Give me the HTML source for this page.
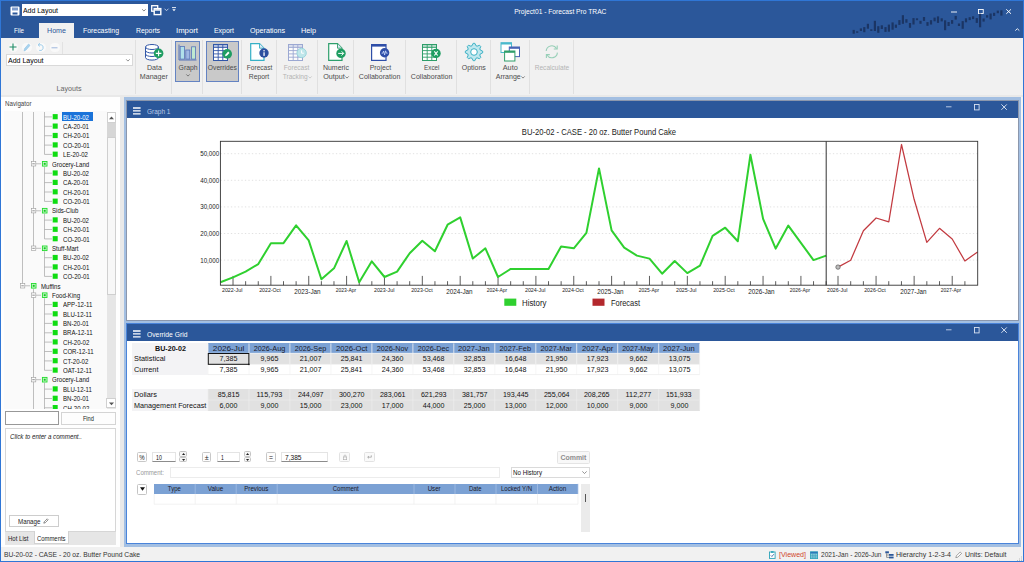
<!DOCTYPE html>
<html><head><meta charset="utf-8"><title>Project01 - Forecast Pro TRAC</title>
<style>
html,body{margin:0;padding:0;}
body{width:1024px;height:562px;overflow:hidden;position:relative;background:#f1f1f1;font-family:"Liberation Sans",sans-serif;}
div,span,svg{position:absolute;}
span{white-space:pre;display:block;}
svg{overflow:visible;}
</style></head><body>
<div style="left:0px;top:0px;width:1024px;height:38px;background:#2b579a;"></div>
<div style="left:0px;top:38px;width:1024px;height:57px;background:#f1f1f1;"></div>
<div style="left:0px;top:95px;width:1024px;height:2px;background:#e9e9e9;"></div>
<svg style="left:10px;top:6px;" width="10" height="10" viewBox="0 0 10 10"><rect x="0.5" y="0.5" width="9" height="9" rx="1" fill="#fff"/><rect x="2" y="1.5" width="6" height="3" fill="#7f9ccc"/><rect x="2.5" y="6.5" width="5" height="2" fill="#2b579a"/></svg>
<div style="left:22px;top:4px;width:126px;height:12px;background:#fff;"></div>
<span style="left:23.30px;top:6.25px;font-size:8.1px;line-height:9px;color:#000;transform:scaleX(0.8546);transform-origin:left center;">Add Layout</span>
<svg style="left:141.6px;top:9.2px;" width="4" height="3" viewBox="0 0 4 3"><path d="M0.2 0.3 L1.95 2 L3.7 0.3" fill="none" stroke="#666" stroke-width="0.8"/></svg>
<svg style="left:151px;top:5px;" width="11" height="11" viewBox="0 0 11 11"><rect x="0.7" y="0.7" width="6" height="5.5" fill="none" stroke="#fff" stroke-width="1.3"/><rect x="3.2" y="3.6" width="6.6" height="6" fill="#2b579a" stroke="#fff" stroke-width="1.4"/><rect x="4" y="4.2" width="5" height="1.5" fill="#fff"/></svg>
<svg style="left:164px;top:8px;" width="5" height="4" viewBox="0 0 5 4"><path d="M0.5 0.7 L2.5 2.7 L4.5 0.7" fill="none" stroke="#c8d4ea" stroke-width="0.9"/></svg>
<svg style="left:172px;top:7px;" width="4" height="5" viewBox="0 0 4 5"><path d="M0 0.6 H4" stroke="#fff" stroke-width="0.9"/><path d="M0.3 2.2 H3.7 L2 4.2 Z" fill="#fff"/></svg>
<span style="left:504.52px;top:7.25px;font-size:8px;line-height:9px;color:#fff;transform:scaleX(0.8348);transform-origin:center center;">Project01 - Forecast Pro TRAC</span>
<svg style="left:950.5px;top:10.5px;" width="8" height="2" viewBox="0 0 8 2"><path d="M0 1 H6" stroke="#fff" stroke-width="0.9"/></svg>
<svg style="left:978.2px;top:9px;" width="6" height="5" viewBox="0 0 6 5"><rect x="0.45" y="0.45" width="4.8" height="4" fill="none" stroke="#fff" stroke-width="0.9"/></svg>
<svg style="left:1006px;top:9px;" width="6" height="6" viewBox="0 0 6 6"><path d="M0.3 0.3 L5 4.8 M5 0.3 L0.3 4.8" stroke="#fff" stroke-width="0.95"/></svg>
<svg style="left:1014.7px;top:28.3px;" width="6" height="4" viewBox="0 0 6 4"><path d="M0.3 2.6 L2.3 0.7 L4.3 2.6" fill="none" stroke="#fff" stroke-width="0.9"/></svg>
<div style="left:39px;top:23px;width:35px;height:16px;background:#f1f1f1;"></div>
<span style="left:14.00px;top:26.25px;font-size:8px;line-height:9px;color:#fff;transform:scaleX(0.7758);transform-origin:left center;">File</span>
<span style="left:47.00px;top:26.25px;font-size:8px;line-height:9px;color:#2b579a;transform:scaleX(0.8902);transform-origin:left center;">Home</span>
<span style="left:83.00px;top:26.25px;font-size:8px;line-height:9px;color:#fff;transform:scaleX(0.8613);transform-origin:left center;">Forecasting</span>
<span style="left:136.00px;top:26.25px;font-size:8px;line-height:9px;color:#fff;transform:scaleX(0.8567);transform-origin:left center;">Reports</span>
<span style="left:176.00px;top:26.25px;font-size:8px;line-height:9px;color:#fff;transform:scaleX(0.9704);transform-origin:left center;">Import</span>
<span style="left:214.00px;top:26.25px;font-size:8px;line-height:9px;color:#fff;transform:scaleX(0.8649);transform-origin:left center;">Export</span>
<span style="left:250.00px;top:26.25px;font-size:8px;line-height:9px;color:#fff;transform:scaleX(0.8942);transform-origin:left center;">Operations</span>
<span style="left:301.00px;top:26.25px;font-size:8px;line-height:9px;color:#fff;transform:scaleX(0.9117);transform-origin:left center;">Help</span>
<svg style="left:0px;top:0px;" width="1024" height="38" viewBox="0 0 1024 38"><rect x="852.6" y="29.9" width="2.2" height="3.8" fill="#1b3564"/><rect x="856.1" y="31.3" width="2.2" height="1.5" fill="#1b3564"/><rect x="859.8" y="28.4" width="2.2" height="2.6" fill="#1b3564"/><rect x="863.2" y="27.1" width="2.2" height="5.1" fill="#1b3564"/><rect x="866.8" y="23.8" width="2.2" height="4.9" fill="#1b3564"/><rect x="870.2" y="29.3" width="2.2" height="1.6" fill="#1b3564"/><rect x="873.8" y="20.8" width="2.2" height="10.2" fill="#1b3564"/><rect x="877.2" y="26.2" width="2.2" height="6.6" fill="#1b3564"/><rect x="880.7" y="25.3" width="2.2" height="3.7" fill="#1b3564"/><rect x="884.4" y="27.1" width="2.2" height="4.8" fill="#1b3564"/><rect x="887.8" y="24.6" width="2.2" height="7.1" fill="#1b3564"/><rect x="891.5" y="22.4" width="2.2" height="7.3" fill="#1b3564"/><rect x="894.8" y="24.6" width="2.2" height="3.2" fill="#1b3564"/><rect x="898.3" y="20.1" width="2.2" height="4.8" fill="#1b3564"/><rect x="901.8" y="15.2" width="2.2" height="8.6" fill="#1b3564"/><rect x="905.3" y="19.2" width="2.2" height="3.5" fill="#1b3564"/><rect x="908.9" y="23" width="2.2" height="4.8" fill="#1b3564"/><rect x="912.4" y="18.1" width="2.2" height="6.4" fill="#1b3564"/><rect x="915.9" y="18.3" width="2.2" height="1.9" fill="#1b3564"/><rect x="919.4" y="20.8" width="2.2" height="3.0" fill="#1b3564"/><rect x="922.9" y="17" width="2.2" height="3.9" fill="#1b3564"/><rect x="926.4" y="22.1" width="2.2" height="3.7" fill="#1b3564"/><rect x="929.9" y="20.2" width="2.2" height="4.3" fill="#1b3564"/><rect x="933.5" y="17.6" width="2.2" height="3.7" fill="#1b3564"/><rect x="936.9" y="16.4" width="2.2" height="6.5" fill="#1b3564"/><rect x="940.6" y="18.3" width="2.2" height="3.1" fill="#1b3564"/><rect x="944.0" y="20.3" width="2.2" height="9.9" fill="#1b3564"/><rect x="947.5" y="22" width="2.2" height="4.0" fill="#1b3564"/><rect x="951.0" y="20.1" width="2.2" height="3.7" fill="#1b3564"/><rect x="954.6" y="15.9" width="2.2" height="3.7" fill="#1b3564"/><rect x="957.9" y="23.5" width="2.2" height="2.5" fill="#1b3564"/><rect x="961.6" y="21.1" width="2.2" height="7.7" fill="#1b3564"/><rect x="964.9" y="18.3" width="2.2" height="4.0" fill="#1b3564"/><rect x="968.6" y="17.2" width="2.2" height="2.9" fill="#1b3564"/><rect x="972.0" y="16.3" width="2.2" height="2.8" fill="#1b3564"/><rect x="975.7" y="18.1" width="2.2" height="4.8" fill="#1b3564"/><rect x="979.0" y="13.7" width="2.2" height="13.6" fill="#1b3564"/><rect x="982.5" y="18.5" width="2.2" height="3.1" fill="#1b3564"/><rect x="986.0" y="15.2" width="2.2" height="2.4" fill="#1b3564"/><rect x="989.5" y="13.5" width="2.2" height="5.9" fill="#1b3564"/><rect x="993.0" y="12.8" width="2.2" height="3.1" fill="#1b3564"/><rect x="996.7" y="10.6" width="2.2" height="2.6" fill="#1b3564"/><rect x="1000.3" y="10.3" width="2.2" height="5.3" fill="#1b3564"/></svg>
<div style="left:8.5px;top:42.5px;width:9.4px;height:9.4px;background:#f9f9f9;border-radius:50%;"></div>
<div style="left:22.3px;top:42.5px;width:9.4px;height:9.4px;background:#f9f9f9;border-radius:50%;"></div>
<div style="left:36.3px;top:42.5px;width:9.4px;height:9.4px;background:#f9f9f9;border-radius:50%;"></div>
<div style="left:50.3px;top:42.5px;width:9.4px;height:9.4px;background:#f9f9f9;border-radius:50%;"></div>
<svg style="left:9.2px;top:43.2px;" width="8" height="8" viewBox="0 0 8 8"><path d="M4 0.5 V7.5 M0.5 4 H7.5" stroke="#1e8c66" stroke-width="1.1"/></svg>
<svg style="left:23px;top:43px;" width="8" height="9" viewBox="0 0 8 9"><path d="M1 8 L1.6 5.6 L5.6 1 L7 2.4 L3 7 Z" fill="#a9d3ee" stroke="#8fc3e6" stroke-width="0.6"/></svg>
<svg style="left:37px;top:43px;" width="8" height="9" viewBox="0 0 8 9"><path d="M1.2 1.8 H4.2 A2.9 2.9 0 1 1 2.2 7.4" fill="none" stroke="#9fcdea" stroke-width="1"/><path d="M2.9 0.2 L1 1.8 L2.9 3.4" fill="none" stroke="#9fcdea" stroke-width="1"/></svg>
<svg style="left:51px;top:47px;" width="8" height="2" viewBox="0 0 8 2"><path d="M0.5 0.8 H6.5" stroke="#9fb7dd" stroke-width="1"/></svg>
<div style="left:62.2px;top:41.5px;width:1px;height:12px;background:#e2e2e2;"></div>
<div style="left:6px;top:54px;width:126.5px;height:12px;background:#fff;border:1px solid #d9d9d9;box-sizing:border-box;"></div>
<span style="left:7.60px;top:56.25px;font-size:8.1px;line-height:9px;color:#000;transform:scaleX(0.8668);transform-origin:left center;">Add Layout</span>
<svg style="left:126.3px;top:59.2px;" width="4" height="3" viewBox="0 0 4 3"><path d="M0.2 0.3 L1.95 2.1 L3.7 0.3" fill="none" stroke="#777" stroke-width="0.8"/></svg>
<span style="left:54.98px;top:84.25px;font-size:8px;line-height:9px;color:#666;transform:scaleX(0.8919);transform-origin:center center;">Layouts</span>
<div style="left:135.0px;top:40px;width:1px;height:54px;background:#e0e0e0;"></div>
<div style="left:171.2px;top:40px;width:1px;height:54px;background:#e0e0e0;"></div>
<div style="left:202.1px;top:40px;width:1px;height:54px;background:#e0e0e0;"></div>
<div style="left:241.1px;top:40px;width:1px;height:54px;background:#e0e0e0;"></div>
<div style="left:276.1px;top:40px;width:1px;height:54px;background:#e0e0e0;"></div>
<div style="left:317.0px;top:40px;width:1px;height:54px;background:#e0e0e0;"></div>
<div style="left:353.1px;top:40px;width:1px;height:54px;background:#e0e0e0;"></div>
<div style="left:405.1px;top:40px;width:1px;height:54px;background:#e0e0e0;"></div>
<div style="left:456.1px;top:40px;width:1px;height:54px;background:#e0e0e0;"></div>
<div style="left:490.0px;top:40px;width:1px;height:54px;background:#e0e0e0;"></div>
<div style="left:529.0px;top:40px;width:1px;height:54px;background:#e0e0e0;"></div>
<div style="left:573.1px;top:40px;width:1px;height:54px;background:#e0e0e0;"></div>
<div style="left:175.2px;top:41px;width:24.8px;height:41px;background:#c9c9c9;border:1px solid #6483c2;box-sizing:border-box;"></div>
<div style="left:206px;top:41px;width:32.9px;height:41px;background:#c9c9c9;border:1px solid #6483c2;box-sizing:border-box;"></div>
<span style="left:145.55px;top:63.25px;font-size:8px;line-height:9px;color:#4c4c4c;transform:scaleX(0.8872);transform-origin:center center;">Data</span>
<span style="left:138.21px;top:72.25px;font-size:8px;line-height:9px;color:#4c4c4c;transform:scaleX(0.8867);transform-origin:center center;">Manager</span>
<span style="left:176.58px;top:63.25px;font-size:8px;line-height:9px;color:#4c4c4c;transform:scaleX(0.8545);transform-origin:center center;">Graph</span>
<svg style="left:185.7px;top:74px;" width="4" height="3" viewBox="0 0 4 3"><path d="M0.3 0.4 L2 2.1 L3.7 0.4" fill="none" stroke="#555" stroke-width="0.7"/></svg>
<span style="left:204.96px;top:63.25px;font-size:8px;line-height:9px;color:#4c4c4c;transform:scaleX(0.8360);transform-origin:center center;">Overrides</span>
<span style="left:243.74px;top:63.25px;font-size:8px;line-height:9px;color:#4c4c4c;transform:scaleX(0.8193);transform-origin:center center;">Forecast</span>
<span style="left:247.29px;top:72.25px;font-size:8px;line-height:9px;color:#4c4c4c;transform:scaleX(0.8536);transform-origin:center center;">Report</span>
<span style="left:281.44px;top:63.25px;font-size:8px;line-height:9px;color:#b4b4b4;transform:scaleX(0.8193);transform-origin:center center;">Forecast</span>
<span style="left:279.80px;top:72.25px;font-size:8px;line-height:9px;color:#b4b4b4;transform:scaleX(0.8226);transform-origin:center center;">Tracking</span>
<svg style="left:308.3px;top:75.5px;" width="4" height="3" viewBox="0 0 4 3"><path d="M0.3 0.4 L2 2.1 L3.7 0.4" fill="none" stroke="#bbb" stroke-width="0.7"/></svg>
<span style="left:320.81px;top:63.25px;font-size:8px;line-height:9px;color:#4c4c4c;transform:scaleX(0.8730);transform-origin:center center;">Numeric</span>
<span style="left:321.69px;top:72.25px;font-size:8px;line-height:9px;color:#4c4c4c;transform:scaleX(0.8953);transform-origin:center center;">Output</span>
<svg style="left:345.25px;top:75.5px;" width="4" height="3" viewBox="0 0 4 3"><path d="M0.3 0.4 L2 2.1 L3.7 0.4" fill="none" stroke="#555" stroke-width="0.7"/></svg>
<span style="left:367.55px;top:63.25px;font-size:8px;line-height:9px;color:#4c4c4c;transform:scaleX(0.8632);transform-origin:center center;">Project</span>
<span style="left:356.43px;top:72.25px;font-size:8px;line-height:9px;color:#4c4c4c;transform:scaleX(0.8803);transform-origin:center center;">Collaboration</span>
<span style="left:421.52px;top:63.25px;font-size:8px;line-height:9px;color:#4c4c4c;transform:scaleX(0.7923);transform-origin:center center;">Excel</span>
<span style="left:407.73px;top:72.25px;font-size:8px;line-height:9px;color:#4c4c4c;transform:scaleX(0.8803);transform-origin:center center;">Collaboration</span>
<span style="left:460.21px;top:63.25px;font-size:8px;line-height:9px;color:#4c4c4c;transform:scaleX(0.8703);transform-origin:center center;">Options</span>
<span style="left:501.77px;top:63.25px;font-size:8px;line-height:9px;color:#4c4c4c;transform:scaleX(0.9108);transform-origin:center center;">Auto</span>
<span style="left:493.77px;top:72.25px;font-size:8px;line-height:9px;color:#4c4c4c;transform:scaleX(0.8782);transform-origin:center center;">Arrange</span>
<svg style="left:521.3px;top:75.5px;" width="4" height="3" viewBox="0 0 4 3"><path d="M0.3 0.4 L2 2.1 L3.7 0.4" fill="none" stroke="#555" stroke-width="0.7"/></svg>
<span style="left:531.09px;top:63.25px;font-size:8px;line-height:9px;color:#b4b4b4;transform:scaleX(0.8251);transform-origin:center center;">Recalculate</span>
<svg style="left:144px;top:43px;" width="22" height="20" viewBox="0 0 22 20"><path d="M1.5 4 V14.5 A6.5 2.6 0 0 0 14.5 14.5 V4" fill="#fff" stroke="#3257a8" stroke-width="1"/>
<ellipse cx="8" cy="4" rx="6.5" ry="2.5" fill="#fff" stroke="#3257a8" stroke-width="1"/>
<path d="M1.5 7.5 A6.5 2.5 0 0 0 14.5 7.5 M1.5 11 A6.5 2.5 0 0 0 14.5 11" fill="none" stroke="#3257a8" stroke-width="1"/>
<circle cx="14.6" cy="10.4" r="4.8" fill="#1f9d62"/><path d="M14.6 7.6 V13.2 M11.8 10.4 H17.4" stroke="#fff" stroke-width="1.1"/></svg>
<svg style="left:178px;top:44px;" width="19" height="17" viewBox="0 0 19 17"><path d="M1 0.5 V16 H18.5" fill="none" stroke="#5674ba" stroke-width="1"/>
<rect x="2.2" y="2.5" width="4.2" height="12.6" fill="#b0e0ea" stroke="#5674ba" stroke-width="0.8"/>
<rect x="7.8" y="6" width="4" height="9.1" fill="#9fb8e4" stroke="#5674ba" stroke-width="0.8"/>
<rect x="13.6" y="2.8" width="4" height="12.3" fill="#bfe9d0" stroke="#5674ba" stroke-width="0.8"/></svg>
<svg style="left:213px;top:44px;" width="22" height="18" viewBox="0 0 22 18"><g opacity="1"><rect x="0.5" y="0.5" width="14" height="16" fill="#fff" stroke="#3257a8" stroke-width="1"/><rect x="0.5" y="0.5" width="14" height="3" fill="#3257a8" opacity="0.35"/><path d="M0.5 3.4 H14.5" stroke="#3257a8" stroke-width="0.9"/><path d="M0.5 6.6 H14.5" stroke="#3257a8" stroke-width="0.9"/><path d="M0.5 9.9 H14.5" stroke="#3257a8" stroke-width="0.9"/><path d="M0.5 13.2 H14.5" stroke="#3257a8" stroke-width="0.9"/><path d="M5.2 0.5 V16.5" stroke="#3257a8" stroke-width="0.9"/><path d="M9.8 0.5 V16.5" stroke="#3257a8" stroke-width="0.9"/></g><circle cx="14.2" cy="9.9" r="4.8" fill="#1f9d62"/><path d="M12 12.2 L12.5 10.4 L15.2 7.6 L16.5 8.9 L13.8 11.7 Z" fill="#fff"/></svg>
<svg style="left:250px;top:43px;" width="20" height="19" viewBox="0 0 20 19"><path d="M0.7 0.7 H9.5 L14 5.2 V17.3 H0.7 Z" fill="#fff" stroke="#35b0c6" stroke-width="1.2"/><path d="M9.5 0.7 V5.2 H14" fill="#dfe7f5" stroke="#35b0c6" stroke-width="0.9"/><circle cx="14" cy="10" r="4.7" fill="#2c4f9f"/><rect x="13.4" y="9.3" width="1.3" height="3.6" fill="#fff"/><circle cx="14.05" cy="7.7" r="0.8" fill="#fff"/></svg>
<svg style="left:288px;top:44px;" width="20" height="18" viewBox="0 0 20 18"><g opacity="0.75"><rect x="0.5" y="0.5" width="14" height="16" fill="#fff" stroke="#7f90c8" stroke-width="1"/><rect x="0.5" y="0.5" width="14" height="3" fill="#7f90c8" opacity="0.35"/><path d="M0.5 3.4 H14.5" stroke="#7f90c8" stroke-width="0.9"/><path d="M0.5 6.6 H14.5" stroke="#7f90c8" stroke-width="0.9"/><path d="M0.5 9.9 H14.5" stroke="#7f90c8" stroke-width="0.9"/><path d="M0.5 13.2 H14.5" stroke="#7f90c8" stroke-width="0.9"/><path d="M5.2 0.5 V16.5" stroke="#7f90c8" stroke-width="0.9"/><path d="M9.8 0.5 V16.5" stroke="#7f90c8" stroke-width="0.9"/></g><circle cx="13.6" cy="9" r="4.7" fill="#bfe6ea" stroke="#8fd0d8" stroke-width="0.8"/><path d="M13.6 6.3 V9.2 H15.8" fill="none" stroke="#fff" stroke-width="1"/></svg>
<svg style="left:327.5px;top:43px;" width="20" height="19" viewBox="0 0 20 19"><path d="M0.7 0.7 H9.5 L14 5.2 V17.3 H0.7 Z" fill="#fff" stroke="#2e9f6c" stroke-width="1.2"/><path d="M9.5 0.7 V5.2 H14" fill="#dfe7f5" stroke="#2e9f6c" stroke-width="0.9"/><circle cx="13" cy="10.4" r="4.7" fill="#1f9d62"/><path d="M10.2 10.4 H15.6 M13.6 8.3 L15.7 10.4 L13.6 12.5" fill="none" stroke="#fff" stroke-width="1"/></svg>
<svg style="left:371px;top:44px;" width="20" height="18" viewBox="0 0 20 18"><rect x="0.6" y="0.6" width="14.4" height="15.8" fill="#fff" stroke="#2f4fa8" stroke-width="1.2"/><rect x="0.6" y="0.6" width="14.4" height="2" fill="#2f4fa8"/><circle cx="13.6" cy="8.8" r="4.7" fill="#2f4fa8"/><path d="M10.6 9.2 H11.8 L12.6 7 L13.6 11 L14.6 6.8 L15.4 9.2 H16.6" fill="none" stroke="#cfe0ff" stroke-width="0.8"/></svg>
<svg style="left:422px;top:44px;" width="20" height="18" viewBox="0 0 20 18"><g opacity="1"><rect x="0.5" y="0.5" width="14" height="16" fill="#fff" stroke="#2f9e6a" stroke-width="1"/><rect x="0.5" y="0.5" width="14" height="3" fill="#2f9e6a" opacity="0.35"/><path d="M0.5 3.4 H14.5" stroke="#2f9e6a" stroke-width="0.9"/><path d="M0.5 6.6 H14.5" stroke="#2f9e6a" stroke-width="0.9"/><path d="M0.5 9.9 H14.5" stroke="#2f9e6a" stroke-width="0.9"/><path d="M0.5 13.2 H14.5" stroke="#2f9e6a" stroke-width="0.9"/><path d="M5.2 0.5 V16.5" stroke="#2f9e6a" stroke-width="0.9"/><path d="M9.8 0.5 V16.5" stroke="#2f9e6a" stroke-width="0.9"/></g><circle cx="14" cy="9.4" r="4.7" fill="#1f9d62"/><path d="M12.3 7.3 L15.7 11.5 M15.7 7.3 L12.3 11.5" stroke="#fff" stroke-width="1.1"/></svg>
<svg style="left:464px;top:42px;" width="20" height="20" viewBox="0 0 20 20"><polygon points="9.15,1.34 10.85,1.34 11.92,3.68 13.11,4.18 15.52,3.27 16.73,4.48 15.82,6.89 16.32,8.08 18.66,9.15 18.66,10.85 16.32,11.92 15.82,13.11 16.73,15.52 15.52,16.73 13.11,15.82 11.92,16.32 10.85,18.66 9.15,18.66 8.08,16.32 6.89,15.82 4.48,16.73 3.27,15.52 4.18,13.11 3.68,11.92 1.34,10.85 1.34,9.15 3.68,8.08 4.18,6.89 3.27,4.48 4.48,3.27 6.89,4.18 8.08,3.68" fill="#bfe7ee" stroke="#39b0c4" stroke-width="1" stroke-linejoin="round"/><circle cx="10" cy="10" r="3.3" fill="#fff" stroke="#39b0c4" stroke-width="1"/></svg>
<svg style="left:500px;top:42px;" width="22" height="20" viewBox="0 0 22 20"><rect x="1" y="0.7" width="10.5" height="9.8" fill="#fff" stroke="#49b9cc" stroke-width="1"/><rect x="1" y="0.7" width="10.5" height="1.8" fill="#49b9cc"/><rect x="9.3" y="5" width="10.2" height="9.6" fill="#fff" stroke="#4762b4" stroke-width="1"/><rect x="9.3" y="5" width="10.2" height="1.8" fill="#4762b4"/><rect x="4.6" y="9" width="10.3" height="10" fill="#fff" stroke="#2f9e6a" stroke-width="1"/><rect x="4.6" y="9" width="10.3" height="1.8" fill="#2f9e6a"/></svg>
<svg style="left:544px;top:44px;" width="16" height="16" viewBox="0 0 16 16"><g opacity="0.55"><path d="M2.2 7 A5.6 5.6 0 0 1 12.6 4.6" fill="none" stroke="#4fb58a" stroke-width="1.1"/><path d="M13.4 8.6 A5.6 5.6 0 0 1 3 11" fill="none" stroke="#4fb58a" stroke-width="1.1"/><path d="M13.2 1.6 V5 H9.8" fill="none" stroke="#4fb58a" stroke-width="1.1"/><path d="M2.4 14 V10.6 H5.8" fill="none" stroke="#4fb58a" stroke-width="1.1"/></g></svg>
<div style="left:0px;top:97px;width:120px;height:450px;background:#fefefe;"></div>
<div style="left:120.3px;top:97px;width:3.4px;height:450px;background:#e9e9e9;"></div>
<span style="left:4.90px;top:99.25px;font-size:7.2px;line-height:9px;color:#444;transform:scaleX(0.8614);transform-origin:left center;">Navigator</span>
<div style="left:4px;top:111px;width:102.5px;height:297.5px;background:#fafafa;"></div>
<div style="left:4px;top:111.5px;width:102px;height:297px;overflow:hidden"><svg style="left:-4px;top:-111.5px" width="120" height="562" viewBox="0 0 120 562"><path d="M22.5 109.0 V285.8" stroke="#a4a4a4" stroke-width="0.7"/><path d="M33.5 109.0 V248.3" stroke="#a4a4a4" stroke-width="0.7"/><path d="M33.5 288.8 V410.0" stroke="#a4a4a4" stroke-width="0.7"/><path d="M44.5 109.0 V154.4" stroke="#a4a4a4" stroke-width="0.7"/><path d="M44.5 166.8 V201.4" stroke="#a4a4a4" stroke-width="0.7"/><path d="M44.5 213.8 V238.9" stroke="#a4a4a4" stroke-width="0.7"/><path d="M44.5 251.3 V276.4" stroke="#a4a4a4" stroke-width="0.7"/><path d="M44.5 298.2 V370.3" stroke="#a4a4a4" stroke-width="0.7"/><path d="M44.5 382.7 V410.0" stroke="#a4a4a4" stroke-width="0.7"/><path d="M44.5 116.9 H52" stroke="#a4a4a4" stroke-width="0.7"/><rect x="52.7" y="114.1" width="5" height="5.2" fill="#0fdc12"/><path d="M44.5 126.3 H52" stroke="#a4a4a4" stroke-width="0.7"/><rect x="52.7" y="123.5" width="5" height="5.2" fill="#0fdc12"/><path d="M44.5 135.7 H52" stroke="#a4a4a4" stroke-width="0.7"/><rect x="52.7" y="132.9" width="5" height="5.2" fill="#0fdc12"/><path d="M44.5 145.1 H52" stroke="#a4a4a4" stroke-width="0.7"/><rect x="52.7" y="142.3" width="5" height="5.2" fill="#0fdc12"/><path d="M44.5 154.4 H52" stroke="#a4a4a4" stroke-width="0.7"/><rect x="52.7" y="151.6" width="5" height="5.2" fill="#0fdc12"/><path d="M33.5 163.8 H41" stroke="#a4a4a4" stroke-width="0.7"/><rect x="31.3" y="161.5" width="4.5" height="4.5" fill="#fff" stroke="#9a9a9a" stroke-width="0.6"/><path d="M32.3 163.8 H34.8" stroke="#444" stroke-width="0.6"/><rect x="42.4" y="161.5" width="4.6" height="4.6" fill="#d4f8d8" stroke="#1fdc2a" stroke-width="0.9"/><rect x="43.7" y="162.8" width="2" height="2" fill="#14c81e"/><path d="M44.5 173.2 H52" stroke="#a4a4a4" stroke-width="0.7"/><rect x="52.7" y="170.4" width="5" height="5.2" fill="#0fdc12"/><path d="M44.5 182.6 H52" stroke="#a4a4a4" stroke-width="0.7"/><rect x="52.7" y="179.8" width="5" height="5.2" fill="#0fdc12"/><path d="M44.5 192.0 H52" stroke="#a4a4a4" stroke-width="0.7"/><rect x="52.7" y="189.2" width="5" height="5.2" fill="#0fdc12"/><path d="M44.5 201.4 H52" stroke="#a4a4a4" stroke-width="0.7"/><rect x="52.7" y="198.6" width="5" height="5.2" fill="#0fdc12"/><path d="M33.5 210.8 H41" stroke="#a4a4a4" stroke-width="0.7"/><rect x="31.3" y="208.4" width="4.5" height="4.5" fill="#fff" stroke="#9a9a9a" stroke-width="0.6"/><path d="M32.3 210.8 H34.8" stroke="#444" stroke-width="0.6"/><rect x="42.4" y="208.4" width="4.6" height="4.6" fill="#d4f8d8" stroke="#1fdc2a" stroke-width="0.9"/><rect x="43.7" y="209.8" width="2" height="2" fill="#14c81e"/><path d="M44.5 220.1 H52" stroke="#a4a4a4" stroke-width="0.7"/><rect x="52.7" y="217.3" width="5" height="5.2" fill="#0fdc12"/><path d="M44.5 229.5 H52" stroke="#a4a4a4" stroke-width="0.7"/><rect x="52.7" y="226.7" width="5" height="5.2" fill="#0fdc12"/><path d="M44.5 238.9 H52" stroke="#a4a4a4" stroke-width="0.7"/><rect x="52.7" y="236.1" width="5" height="5.2" fill="#0fdc12"/><path d="M33.5 248.3 H41" stroke="#a4a4a4" stroke-width="0.7"/><rect x="31.3" y="246.0" width="4.5" height="4.5" fill="#fff" stroke="#9a9a9a" stroke-width="0.6"/><path d="M32.3 248.3 H34.8" stroke="#444" stroke-width="0.6"/><rect x="42.4" y="246.0" width="4.6" height="4.6" fill="#d4f8d8" stroke="#1fdc2a" stroke-width="0.9"/><rect x="43.7" y="247.3" width="2" height="2" fill="#14c81e"/><path d="M44.5 257.7 H52" stroke="#a4a4a4" stroke-width="0.7"/><rect x="52.7" y="254.9" width="5" height="5.2" fill="#0fdc12"/><path d="M44.5 267.1 H52" stroke="#a4a4a4" stroke-width="0.7"/><rect x="52.7" y="264.3" width="5" height="5.2" fill="#0fdc12"/><path d="M44.5 276.4 H52" stroke="#a4a4a4" stroke-width="0.7"/><rect x="52.7" y="273.6" width="5" height="5.2" fill="#0fdc12"/><path d="M22.5 285.8 H30" stroke="#a4a4a4" stroke-width="0.7"/><rect x="20.3" y="283.5" width="4.5" height="4.5" fill="#fff" stroke="#9a9a9a" stroke-width="0.6"/><path d="M21.3 285.8 H23.8" stroke="#444" stroke-width="0.6"/><rect x="31.4" y="283.5" width="4.6" height="4.6" fill="#d4f8d8" stroke="#1fdc2a" stroke-width="0.9"/><rect x="32.7" y="284.8" width="2" height="2" fill="#14c81e"/><path d="M33.5 295.2 H41" stroke="#a4a4a4" stroke-width="0.7"/><rect x="31.3" y="292.9" width="4.5" height="4.5" fill="#fff" stroke="#9a9a9a" stroke-width="0.6"/><path d="M32.3 295.2 H34.8" stroke="#444" stroke-width="0.6"/><rect x="42.4" y="292.9" width="4.6" height="4.6" fill="#d4f8d8" stroke="#1fdc2a" stroke-width="0.9"/><rect x="43.7" y="294.2" width="2" height="2" fill="#14c81e"/><path d="M44.5 304.6 H52" stroke="#a4a4a4" stroke-width="0.7"/><rect x="52.7" y="301.8" width="5" height="5.2" fill="#0fdc12"/><path d="M44.5 314.0 H52" stroke="#a4a4a4" stroke-width="0.7"/><rect x="52.7" y="311.2" width="5" height="5.2" fill="#0fdc12"/><path d="M44.5 323.4 H52" stroke="#a4a4a4" stroke-width="0.7"/><rect x="52.7" y="320.6" width="5" height="5.2" fill="#0fdc12"/><path d="M44.5 332.8 H52" stroke="#a4a4a4" stroke-width="0.7"/><rect x="52.7" y="330.0" width="5" height="5.2" fill="#0fdc12"/><path d="M44.5 342.1 H52" stroke="#a4a4a4" stroke-width="0.7"/><rect x="52.7" y="339.3" width="5" height="5.2" fill="#0fdc12"/><path d="M44.5 351.5 H52" stroke="#a4a4a4" stroke-width="0.7"/><rect x="52.7" y="348.7" width="5" height="5.2" fill="#0fdc12"/><path d="M44.5 360.9 H52" stroke="#a4a4a4" stroke-width="0.7"/><rect x="52.7" y="358.1" width="5" height="5.2" fill="#0fdc12"/><path d="M44.5 370.3 H52" stroke="#a4a4a4" stroke-width="0.7"/><rect x="52.7" y="367.5" width="5" height="5.2" fill="#0fdc12"/><path d="M33.5 379.7 H41" stroke="#a4a4a4" stroke-width="0.7"/><rect x="31.3" y="377.4" width="4.5" height="4.5" fill="#fff" stroke="#9a9a9a" stroke-width="0.6"/><path d="M32.3 379.7 H34.8" stroke="#444" stroke-width="0.6"/><rect x="42.4" y="377.4" width="4.6" height="4.6" fill="#d4f8d8" stroke="#1fdc2a" stroke-width="0.9"/><rect x="43.7" y="378.7" width="2" height="2" fill="#14c81e"/><path d="M44.5 389.1 H52" stroke="#a4a4a4" stroke-width="0.7"/><rect x="52.7" y="386.3" width="5" height="5.2" fill="#0fdc12"/><path d="M44.5 398.5 H52" stroke="#a4a4a4" stroke-width="0.7"/><rect x="52.7" y="395.7" width="5" height="5.2" fill="#0fdc12"/><path d="M44.5 407.8 H52" stroke="#a4a4a4" stroke-width="0.7"/><rect x="52.7" y="405.0" width="5" height="5.2" fill="#0fdc12"/></svg></div>
<div style="left:62px;top:112.2px;width:30.7px;height:9.2px;background:#1a73d9;"></div>
<div style="left:4px;top:109px;width:102px;height:299.5px;overflow:hidden">
<span style="left:59.30px;top:5.25px;font-size:7.0px;line-height:7px;color:#fff;transform:scaleX(0.8680);transform-origin:left center;">BU-20-02</span>
<span style="left:59.30px;top:14.25px;font-size:7.0px;line-height:7px;color:#111;transform:scaleX(0.8680);transform-origin:left center;">CA-20-01</span>
<span style="left:59.30px;top:23.25px;font-size:7.0px;line-height:7px;color:#111;transform:scaleX(0.8680);transform-origin:left center;">CH-20-01</span>
<span style="left:59.30px;top:33.25px;font-size:7.0px;line-height:7px;color:#111;transform:scaleX(0.8680);transform-origin:left center;">CO-20-01</span>
<span style="left:59.30px;top:42.25px;font-size:7.0px;line-height:7px;color:#111;transform:scaleX(0.8680);transform-origin:left center;">LE-20-02</span>
<span style="left:48.30px;top:52.25px;font-size:7.0px;line-height:7px;color:#111;transform:scaleX(0.8680);transform-origin:left center;">Grocery-Land</span>
<span style="left:59.30px;top:61.25px;font-size:7.0px;line-height:7px;color:#111;transform:scaleX(0.8680);transform-origin:left center;">BU-20-02</span>
<span style="left:59.30px;top:70.25px;font-size:7.0px;line-height:7px;color:#111;transform:scaleX(0.8680);transform-origin:left center;">CA-20-01</span>
<span style="left:59.30px;top:80.25px;font-size:7.0px;line-height:7px;color:#111;transform:scaleX(0.8680);transform-origin:left center;">CH-20-01</span>
<span style="left:59.30px;top:89.25px;font-size:7.0px;line-height:7px;color:#111;transform:scaleX(0.8680);transform-origin:left center;">CO-20-01</span>
<span style="left:48.30px;top:98.25px;font-size:7.0px;line-height:7px;color:#111;transform:scaleX(0.8680);transform-origin:left center;">Sids-Club</span>
<span style="left:59.30px;top:108.25px;font-size:7.0px;line-height:7px;color:#111;transform:scaleX(0.8680);transform-origin:left center;">BU-20-02</span>
<span style="left:59.30px;top:117.25px;font-size:7.0px;line-height:7px;color:#111;transform:scaleX(0.8680);transform-origin:left center;">CH-20-01</span>
<span style="left:59.30px;top:127.25px;font-size:7.0px;line-height:7px;color:#111;transform:scaleX(0.8680);transform-origin:left center;">CO-20-01</span>
<span style="left:48.30px;top:136.25px;font-size:7.0px;line-height:7px;color:#111;transform:scaleX(0.8680);transform-origin:left center;">Stuff-Mart</span>
<span style="left:59.30px;top:145.25px;font-size:7.0px;line-height:7px;color:#111;transform:scaleX(0.8680);transform-origin:left center;">BU-20-02</span>
<span style="left:59.30px;top:155.25px;font-size:7.0px;line-height:7px;color:#111;transform:scaleX(0.8680);transform-origin:left center;">CH-20-01</span>
<span style="left:59.30px;top:164.25px;font-size:7.0px;line-height:7px;color:#111;transform:scaleX(0.8680);transform-origin:left center;">CO-20-01</span>
<span style="left:37.30px;top:174.25px;font-size:7.0px;line-height:7px;color:#111;transform:scaleX(0.8680);transform-origin:left center;">Muffins</span>
<span style="left:48.30px;top:183.25px;font-size:7.0px;line-height:7px;color:#111;transform:scaleX(0.8680);transform-origin:left center;">Food-King</span>
<span style="left:59.30px;top:192.25px;font-size:7.0px;line-height:7px;color:#111;transform:scaleX(0.8680);transform-origin:left center;">APP-12-11</span>
<span style="left:59.30px;top:202.25px;font-size:7.0px;line-height:7px;color:#111;transform:scaleX(0.8680);transform-origin:left center;">BLU-12-11</span>
<span style="left:59.30px;top:211.25px;font-size:7.0px;line-height:7px;color:#111;transform:scaleX(0.8680);transform-origin:left center;">BN-20-01</span>
<span style="left:59.30px;top:220.25px;font-size:7.0px;line-height:7px;color:#111;transform:scaleX(0.8680);transform-origin:left center;">BRA-12-11</span>
<span style="left:59.30px;top:230.25px;font-size:7.0px;line-height:7px;color:#111;transform:scaleX(0.8680);transform-origin:left center;">CH-20-02</span>
<span style="left:59.30px;top:239.25px;font-size:7.0px;line-height:7px;color:#111;transform:scaleX(0.8680);transform-origin:left center;">COR-12-11</span>
<span style="left:59.30px;top:249.25px;font-size:7.0px;line-height:7px;color:#111;transform:scaleX(0.8680);transform-origin:left center;">CT-20-02</span>
<span style="left:59.30px;top:258.25px;font-size:7.0px;line-height:7px;color:#111;transform:scaleX(0.8680);transform-origin:left center;">OAT-12-11</span>
<span style="left:48.30px;top:267.25px;font-size:7.0px;line-height:7px;color:#111;transform:scaleX(0.8680);transform-origin:left center;">Grocery-Land</span>
<span style="left:59.30px;top:277.25px;font-size:7.0px;line-height:7px;color:#111;transform:scaleX(0.8680);transform-origin:left center;">BLU-12-11</span>
<span style="left:59.30px;top:286.25px;font-size:7.0px;line-height:7px;color:#111;transform:scaleX(0.8680);transform-origin:left center;">BN-20-01</span>
<span style="left:59.30px;top:296.25px;font-size:7.0px;line-height:7px;color:#111;transform:scaleX(0.8680);transform-origin:left center;">CH-20-02</span>
</div>
<div style="left:106.5px;top:111.5px;width:9.5px;height:297px;background:#e6e6e6;"></div>
<div style="left:106.5px;top:122.5px;width:9.5px;height:14.5px;background:#d6d6d6;"></div>
<div style="left:106.5px;top:137px;width:9.5px;height:158px;background:#f7f7f7;border:1px solid #cfcfcf;box-sizing:border-box;"></div>
<div style="left:106.5px;top:112px;width:9.2px;height:10.5px;background:#fff;border:1px solid #d0d0d0;box-sizing:border-box;"></div>
<svg style="left:108.6px;top:115.5px;" width="5" height="4" viewBox="0 0 5 4"><path d="M0 3.2 L2.5 0.4 L5 3.2 Z" fill="#555"/></svg>
<div style="left:106.3px;top:398.2px;width:9.4px;height:10.3px;background:#fff;border:1px solid #d0d0d0;box-sizing:border-box;"></div>
<svg style="left:108.6px;top:401.6px;" width="5" height="4" viewBox="0 0 5 4"><path d="M0 0.4 L2.5 3.2 L5 0.4 Z" fill="#555"/></svg>
<div style="left:4.6px;top:411.4px;width:54.2px;height:13.3px;background:#fff;border:1px solid #989898;box-sizing:border-box;"></div>
<div style="left:61.2px;top:412px;width:54.5px;height:12.6px;background:#fdfdfd;border:1px solid #d4d4d4;box-sizing:border-box;"></div>
<span style="left:81.11px;top:414.25px;font-size:7.6px;line-height:9px;color:#222;transform:scaleX(0.7442);transform-origin:center center;">Find</span>
<div style="left:4.6px;top:428.2px;width:111.2px;height:103.4px;background:#fff;border:1px solid #d6d6d6;box-sizing:border-box;"></div>
<span style="left:10.00px;top:432.25px;font-size:7.6px;line-height:9px;color:#222;transform:scaleX(0.8162);transform-origin:left center;font-style:italic;">Click to enter a comment..</span>
<div style="left:9px;top:514.7px;width:49.8px;height:12.8px;background:#fff;border:1px solid #cdcdcd;box-sizing:border-box;"></div>
<span style="left:18.00px;top:517.25px;font-size:7.6px;line-height:9px;color:#222;transform:scaleX(0.8196);transform-origin:left center;">Manage</span>
<svg style="left:43px;top:518px;" width="6" height="6" viewBox="0 0 6 6"><path d="M0.8 5.2 L1.2 3.8 L4.2 0.8 L5.2 1.8 L2.2 4.8 Z" fill="none" stroke="#444" stroke-width="0.6"/></svg>
<div style="left:4.6px;top:531.6px;width:111.2px;height:13.2px;background:#e6e6e6;"></div>
<div style="left:33.5px;top:531.4px;width:35.2px;height:12.8px;background:#fff;border:1px solid #d2d2d2;box-sizing:border-box;border-top:none"></div>
<span style="left:8.00px;top:534.25px;font-size:7.6px;line-height:9px;color:#222;transform:scaleX(0.7961);transform-origin:left center;">Hot List</span>
<span style="left:37.00px;top:534.25px;font-size:7.6px;line-height:9px;color:#222;transform:scaleX(0.7762);transform-origin:left center;">Comments</span>
<div style="left:0px;top:547px;width:1024px;height:15px;background:#f1f1f1;"></div>
<span style="left:3.50px;top:550.25px;font-size:7.8px;line-height:9px;color:#333;transform:scaleX(0.8621);transform-origin:left center;">BU-20-02 - CASE - 20 oz. Butter Pound Cake</span>
<span style="left:778.60px;top:550.25px;font-size:7.8px;line-height:9px;color:#d0452c;transform:scaleX(0.9071);transform-origin:left center;">[Viewed]</span>
<span style="left:820.50px;top:550.25px;font-size:7.8px;line-height:9px;color:#333;transform:scaleX(0.8406);transform-origin:left center;">2021-Jan - 2026-Jun</span>
<span style="left:896.00px;top:550.25px;font-size:7.8px;line-height:9px;color:#333;transform:scaleX(0.9065);transform-origin:left center;">Hierarchy 1-2-3-4</span>
<span style="left:965.00px;top:550.25px;font-size:7.8px;line-height:9px;color:#333;transform:scaleX(0.8865);transform-origin:left center;">Units: Default</span>
<svg style="left:769px;top:550.5px;" width="7" height="8" viewBox="0 0 7 8"><rect x="0.5" y="1" width="5.6" height="6.4" fill="#fff" stroke="#2aa3b8" stroke-width="0.9"/><rect x="2" y="0.2" width="2.6" height="1.6" fill="#2aa3b8"/><path d="M1.8 4.4 L2.9 5.5 L4.8 3.2" fill="none" stroke="#2b579a" stroke-width="0.8"/></svg>
<svg style="left:809.5px;top:550.5px;" width="8" height="8" viewBox="0 0 8 8"><rect x="0.4" y="0.8" width="7.2" height="6.8" fill="#8fd3e0" stroke="#2aa3b8" stroke-width="0.8"/><rect x="0.4" y="0.8" width="7.2" height="1.8" fill="#2b79b8"/><path d="M2.8 2.6 V7.6 M5.2 2.6 V7.6 M0.4 4.3 H7.6 M0.4 6 H7.6" stroke="#2b8fb0" stroke-width="0.5"/></svg>
<svg style="left:885px;top:550.5px;" width="9" height="8" viewBox="0 0 9 8"><rect x="0.3" y="0.3" width="3.6" height="2" fill="#2b579a"/><path d="M1.6 2.3 V6.4 H4 M1.6 4 H4" fill="none" stroke="#555" stroke-width="0.6"/><rect x="4" y="3" width="4.6" height="1.8" fill="#2b579a"/><rect x="4" y="5.6" width="4.6" height="1.8" fill="#2b579a"/></svg>
<svg style="left:954.5px;top:550.5px;" width="8" height="8" viewBox="0 0 8 8"><path d="M0.8 6.6 L1.4 4.8 L5.2 1 L6.6 2.4 L2.8 6.2 Z" fill="#fff" stroke="#666" stroke-width="0.6"/></svg>
<svg style="left:1017px;top:556px;" width="5" height="5" viewBox="0 0 5 5"><path d="M4.5 0.5 V1.5 M4.5 2.5 V3.5 M2.5 2.5 V3.5 M4.5 4 V5 M2.5 4 V5 M0.5 4 V5" stroke="#bbb" stroke-width="1"/></svg>
<div style="left:123.5px;top:97px;width:897.5px;height:450px;background:#a3bfe2;"></div>
<div style="left:1021px;top:97px;width:2px;height:450px;background:#f4f4f4;"></div>
<div style="left:126px;top:100px;width:892.5px;height:221px;background:#fff;border:1px solid #8b97ad;box-sizing:border-box;"></div>
<div style="left:127px;top:100.6px;width:891px;height:17.4px;background:#2b579a;"></div>
<svg style="left:133px;top:106.8px;" width="8" height="8" viewBox="0 0 8 8"><path d="M0 1 H7.6 M0 3.9 H7.6 M0 6.8 H7.6" stroke="#fff" stroke-width="1.3"/></svg>
<span style="left:146.50px;top:107.25px;font-size:7.6px;line-height:9px;color:#bccbe7;transform:scaleX(0.8560);transform-origin:left center;">Graph 1</span>
<svg style="left:946px;top:106.0px;" width="7" height="2" viewBox="0 0 7 2"><path d="M0 0.8 H5.5" stroke="#c8d4ea" stroke-width="0.9"/></svg>
<svg style="left:973.8px;top:104.0px;" width="6" height="7" viewBox="0 0 6 7"><rect x="0.5" y="0.5" width="4.6" height="5.4" fill="none" stroke="#d8e2f2" stroke-width="0.9"/></svg>
<svg style="left:1001px;top:104.0px;" width="7" height="7" viewBox="0 0 7 7"><path d="M0.4 0.4 L5.8 5.8 M5.8 0.4 L0.4 5.8" stroke="#e4ebf7" stroke-width="0.9"/></svg>
<div style="left:126px;top:323px;width:892.5px;height:221px;background:#fff;border:1px solid #4a84da;box-sizing:border-box;"></div>
<div style="left:127px;top:323.6px;width:891px;height:17.4px;background:#2b579a;"></div>
<svg style="left:133px;top:329.8px;" width="8" height="8" viewBox="0 0 8 8"><path d="M0 1 H7.6 M0 3.9 H7.6 M0 6.8 H7.6" stroke="#fff" stroke-width="1.3"/></svg>
<span style="left:146.50px;top:330.25px;font-size:7.6px;line-height:9px;color:#fff;transform:scaleX(0.8886);transform-origin:left center;">Override Grid</span>
<svg style="left:946px;top:329.0px;" width="7" height="2" viewBox="0 0 7 2"><path d="M0 0.8 H5.5" stroke="#c8d4ea" stroke-width="0.9"/></svg>
<svg style="left:973.8px;top:327.0px;" width="6" height="7" viewBox="0 0 6 7"><rect x="0.5" y="0.5" width="4.6" height="5.4" fill="none" stroke="#d8e2f2" stroke-width="0.9"/></svg>
<svg style="left:1001px;top:327.0px;" width="7" height="7" viewBox="0 0 7 7"><path d="M0.4 0.4 L5.8 5.8 M5.8 0.4 L0.4 5.8" stroke="#e4ebf7" stroke-width="0.9"/></svg>
<svg style="left:0px;top:0px;" width="1024" height="562" viewBox="0 0 1024 562"><path d="M220.4 260.1 H977.7" stroke="#d9d9d9" stroke-width="0.8" stroke-dasharray="1.3 2.2"/><path d="M220.4 233.5 H977.7" stroke="#d9d9d9" stroke-width="0.8" stroke-dasharray="1.3 2.2"/><path d="M220.4 206.9 H977.7" stroke="#d9d9d9" stroke-width="0.8" stroke-dasharray="1.3 2.2"/><path d="M220.4 180.3 H977.7" stroke="#d9d9d9" stroke-width="0.8" stroke-dasharray="1.3 2.2"/><path d="M220.4 153.7 H977.7" stroke="#d9d9d9" stroke-width="0.8" stroke-dasharray="1.3 2.2"/><path d="M233.02 285.2 V275.9" stroke="#333" stroke-width="0.8"/><path d="M245.64 285.2 V281.2" stroke="#333" stroke-width="0.8"/><path d="M258.26 285.2 V281.2" stroke="#333" stroke-width="0.8"/><path d="M270.88 285.2 V275.9" stroke="#333" stroke-width="0.8"/><path d="M283.50 285.2 V281.2" stroke="#333" stroke-width="0.8"/><path d="M296.12 285.2 V281.2" stroke="#333" stroke-width="0.8"/><path d="M308.74 285.2 V275.9" stroke="#333" stroke-width="0.8"/><path d="M321.36 285.2 V281.2" stroke="#333" stroke-width="0.8"/><path d="M333.98 285.2 V281.2" stroke="#333" stroke-width="0.8"/><path d="M346.60 285.2 V275.9" stroke="#333" stroke-width="0.8"/><path d="M359.22 285.2 V281.2" stroke="#333" stroke-width="0.8"/><path d="M371.84 285.2 V281.2" stroke="#333" stroke-width="0.8"/><path d="M384.46 285.2 V275.9" stroke="#333" stroke-width="0.8"/><path d="M397.08 285.2 V281.2" stroke="#333" stroke-width="0.8"/><path d="M409.70 285.2 V281.2" stroke="#333" stroke-width="0.8"/><path d="M422.32 285.2 V275.9" stroke="#333" stroke-width="0.8"/><path d="M434.94 285.2 V281.2" stroke="#333" stroke-width="0.8"/><path d="M447.56 285.2 V281.2" stroke="#333" stroke-width="0.8"/><path d="M460.18 285.2 V275.9" stroke="#333" stroke-width="0.8"/><path d="M472.80 285.2 V281.2" stroke="#333" stroke-width="0.8"/><path d="M485.42 285.2 V281.2" stroke="#333" stroke-width="0.8"/><path d="M498.04 285.2 V275.9" stroke="#333" stroke-width="0.8"/><path d="M510.66 285.2 V281.2" stroke="#333" stroke-width="0.8"/><path d="M523.28 285.2 V281.2" stroke="#333" stroke-width="0.8"/><path d="M535.90 285.2 V275.9" stroke="#333" stroke-width="0.8"/><path d="M548.52 285.2 V281.2" stroke="#333" stroke-width="0.8"/><path d="M561.14 285.2 V281.2" stroke="#333" stroke-width="0.8"/><path d="M573.76 285.2 V275.9" stroke="#333" stroke-width="0.8"/><path d="M586.38 285.2 V281.2" stroke="#333" stroke-width="0.8"/><path d="M599.00 285.2 V281.2" stroke="#333" stroke-width="0.8"/><path d="M611.62 285.2 V275.9" stroke="#333" stroke-width="0.8"/><path d="M624.24 285.2 V281.2" stroke="#333" stroke-width="0.8"/><path d="M636.86 285.2 V281.2" stroke="#333" stroke-width="0.8"/><path d="M649.48 285.2 V275.9" stroke="#333" stroke-width="0.8"/><path d="M662.10 285.2 V281.2" stroke="#333" stroke-width="0.8"/><path d="M674.72 285.2 V281.2" stroke="#333" stroke-width="0.8"/><path d="M687.34 285.2 V275.9" stroke="#333" stroke-width="0.8"/><path d="M699.96 285.2 V281.2" stroke="#333" stroke-width="0.8"/><path d="M712.58 285.2 V281.2" stroke="#333" stroke-width="0.8"/><path d="M725.20 285.2 V275.9" stroke="#333" stroke-width="0.8"/><path d="M737.82 285.2 V281.2" stroke="#333" stroke-width="0.8"/><path d="M750.44 285.2 V281.2" stroke="#333" stroke-width="0.8"/><path d="M763.06 285.2 V275.9" stroke="#333" stroke-width="0.8"/><path d="M775.68 285.2 V281.2" stroke="#333" stroke-width="0.8"/><path d="M788.30 285.2 V281.2" stroke="#333" stroke-width="0.8"/><path d="M800.92 285.2 V275.9" stroke="#333" stroke-width="0.8"/><path d="M813.54 285.2 V281.2" stroke="#333" stroke-width="0.8"/><path d="M826.16 285.2 V281.2" stroke="#333" stroke-width="0.8"/><path d="M838.00 285.2 V275.9" stroke="#333" stroke-width="0.8"/><path d="M850.69 285.2 V281.2" stroke="#333" stroke-width="0.8"/><path d="M863.38 285.2 V281.2" stroke="#333" stroke-width="0.8"/><path d="M876.07 285.2 V275.9" stroke="#333" stroke-width="0.8"/><path d="M888.76 285.2 V281.2" stroke="#333" stroke-width="0.8"/><path d="M901.45 285.2 V281.2" stroke="#333" stroke-width="0.8"/><path d="M914.14 285.2 V275.9" stroke="#333" stroke-width="0.8"/><path d="M926.83 285.2 V281.2" stroke="#333" stroke-width="0.8"/><path d="M939.52 285.2 V281.2" stroke="#333" stroke-width="0.8"/><path d="M952.21 285.2 V275.9" stroke="#333" stroke-width="0.8"/><path d="M964.90 285.2 V281.2" stroke="#333" stroke-width="0.8"/><polyline fill="none" stroke="#2fd02f" stroke-width="2" stroke-linejoin="round" points="220.4,282.2 233.0,277.4 245.6,271.6 258.3,264.1 270.9,243.2 283.5,243.2 296.1,225.3 308.7,240.4 321.4,279.2 334.0,268.3 346.6,241.0 359.2,282.2 371.8,261.3 384.5,277.0 397.1,271.6 409.7,253.2 422.3,240.7 434.9,251.3 447.6,224.7 460.2,217.4 472.8,258.6 485.4,248.3 498.0,277.0 510.7,268.9 523.3,268.9 535.9,268.9 548.5,268.9 561.1,246.5 573.8,248.3 586.4,232.9 599.0,168.4 611.6,230.4 624.2,247.7 636.9,255.6 649.5,258.6 662.1,273.7 674.7,261.0 687.3,273.1 700.0,265.6 712.6,235.9 725.2,227.7 737.8,241.3 750.4,154.8 763.1,218.9 775.7,248.6 788.3,225.6 800.9,242.9 813.5,260.1 826.2,255.6"/><polyline fill="none" stroke="#c23a40" stroke-width="1.25" stroke-linejoin="round" points="838.0,267.1 850.7,260.2 863.4,230.8 876.1,218.0 888.8,221.9 901.5,144.5 914.1,199.3 926.8,242.4 939.5,228.3 952.2,239.0 964.9,261.0 977.6,251.9"/><rect x="220.4" y="141.3" width="757.3" height="143.9" fill="none" stroke="#333" stroke-width="0.9"/><path d="M826.2 141.3 V285.2" stroke="#333" stroke-width="1"/><circle cx="838.0" cy="267.1" r="2.2" fill="#bdbdbd" stroke="#555" stroke-width="0.7"/><rect x="504.3" y="298.6" width="12" height="7.2" fill="#2fd02f"/><rect x="592.5" y="298.6" width="12" height="7.2" fill="#b3282d"/></svg>
<span style="left:511.66px;top:127.25px;font-size:8.6px;line-height:10px;color:#222;transform:scaleX(0.8874);transform-origin:center center;">BU-20-02 - CASE - 20 oz. Butter Pound Cake</span>
<span style="left:198.83px;top:257.25px;font-size:6.6px;line-height:7px;color:#222;transform:scaleX(0.9419);transform-origin:right center;">10,000</span>
<span style="left:198.83px;top:230.25px;font-size:6.6px;line-height:7px;color:#222;transform:scaleX(0.9419);transform-origin:right center;">20,000</span>
<span style="left:198.83px;top:203.25px;font-size:6.6px;line-height:7px;color:#222;transform:scaleX(0.9419);transform-origin:right center;">30,000</span>
<span style="left:198.83px;top:177.25px;font-size:6.6px;line-height:7px;color:#222;transform:scaleX(0.9419);transform-origin:right center;">40,000</span>
<span style="left:198.83px;top:150.25px;font-size:6.6px;line-height:7px;color:#222;transform:scaleX(0.9419);transform-origin:right center;">50,000</span>
<span style="left:221.09px;top:287.25px;font-size:5.8px;line-height:6px;color:#222;transform:scaleX(0.9169);transform-origin:center center;">2022-Jul</span>
<span style="left:258.15px;top:287.25px;font-size:5.8px;line-height:6px;color:#222;transform:scaleX(0.9011);transform-origin:center center;">2022-Oct</span>
<span style="left:292.13px;top:287.25px;font-size:7.4px;line-height:9px;color:#222;transform:scaleX(0.8531);transform-origin:center center;">2023-Jan</span>
<span style="left:333.87px;top:287.25px;font-size:5.8px;line-height:6px;color:#222;transform:scaleX(0.8550);transform-origin:center center;">2023-Apr</span>
<span style="left:372.54px;top:287.25px;font-size:5.8px;line-height:6px;color:#222;transform:scaleX(0.9169);transform-origin:center center;">2023-Jul</span>
<span style="left:409.59px;top:287.25px;font-size:5.8px;line-height:6px;color:#222;transform:scaleX(0.9011);transform-origin:center center;">2023-Oct</span>
<span style="left:443.57px;top:287.25px;font-size:7.4px;line-height:9px;color:#222;transform:scaleX(0.8531);transform-origin:center center;">2024-Jan</span>
<span style="left:485.31px;top:287.25px;font-size:5.8px;line-height:6px;color:#222;transform:scaleX(0.8550);transform-origin:center center;">2024-Apr</span>
<span style="left:523.98px;top:287.25px;font-size:5.8px;line-height:6px;color:#222;transform:scaleX(0.9169);transform-origin:center center;">2024-Jul</span>
<span style="left:561.03px;top:287.25px;font-size:5.8px;line-height:6px;color:#222;transform:scaleX(0.9011);transform-origin:center center;">2024-Oct</span>
<span style="left:595.01px;top:287.25px;font-size:7.4px;line-height:9px;color:#222;transform:scaleX(0.8531);transform-origin:center center;">2025-Jan</span>
<span style="left:636.75px;top:287.25px;font-size:5.8px;line-height:6px;color:#222;transform:scaleX(0.8550);transform-origin:center center;">2025-Apr</span>
<span style="left:675.42px;top:287.25px;font-size:5.8px;line-height:6px;color:#222;transform:scaleX(0.9169);transform-origin:center center;">2025-Jul</span>
<span style="left:712.47px;top:287.25px;font-size:5.8px;line-height:6px;color:#222;transform:scaleX(0.9011);transform-origin:center center;">2025-Oct</span>
<span style="left:746.45px;top:287.25px;font-size:7.4px;line-height:9px;color:#222;transform:scaleX(0.8531);transform-origin:center center;">2026-Jan</span>
<span style="left:788.19px;top:287.25px;font-size:5.8px;line-height:6px;color:#222;transform:scaleX(0.8550);transform-origin:center center;">2026-Apr</span>
<span style="left:826.08px;top:287.25px;font-size:5.8px;line-height:6px;color:#222;transform:scaleX(0.9169);transform-origin:center center;">2026-Jul</span>
<span style="left:863.34px;top:287.25px;font-size:5.8px;line-height:6px;color:#222;transform:scaleX(0.9011);transform-origin:center center;">2026-Oct</span>
<span style="left:897.53px;top:287.25px;font-size:7.4px;line-height:9px;color:#222;transform:scaleX(0.8531);transform-origin:center center;">2027-Jan</span>
<span style="left:939.48px;top:287.25px;font-size:5.8px;line-height:6px;color:#222;transform:scaleX(0.8550);transform-origin:center center;">2027-Apr</span>
<span style="left:522.00px;top:298.25px;font-size:8.4px;line-height:10px;color:#222;transform:scaleX(0.9400);transform-origin:left center;">History</span>
<span style="left:610.50px;top:298.25px;font-size:8.4px;line-height:10px;color:#222;transform:scaleX(0.8897);transform-origin:left center;">Forecast</span>
<div style="left:131.8px;top:343.4px;width:76.19999999999999px;height:31.200000000000045px;background:#f3f3f5;"></div>
<div style="left:131.8px;top:389.2px;width:76.19999999999999px;height:21.400000000000034px;background:#f3f3f5;"></div>
<span style="left:153.84px;top:344.25px;font-size:7.6px;line-height:9px;color:#111;transform:scaleX(0.9416);transform-origin:center center;font-weight:700;">BU-20-02</span>
<span style="left:133.80px;top:354.25px;font-size:7.6px;line-height:9px;color:#111;transform:scaleX(0.9692);transform-origin:left center;">Statistical</span>
<span style="left:133.80px;top:365.25px;font-size:7.6px;line-height:9px;color:#111;transform:scaleX(0.9673);transform-origin:left center;">Current</span>
<span style="left:133.80px;top:390.25px;font-size:7.6px;line-height:9px;color:#111;transform:scaleX(0.9729);transform-origin:left center;">Dollars</span>
<span style="left:133.80px;top:401.25px;font-size:7.6px;line-height:9px;color:#111;transform:scaleX(0.9515);transform-origin:left center;">Management Forecast</span>
<div style="left:208.0px;top:343.4px;width:491.64px;height:9.900000000000034px;background:#7ba1d4;"></div>
<div style="left:208.0px;top:353.3px;width:491.64px;height:11.0px;background:#e1e1e1;"></div>
<div style="left:208.0px;top:364.3px;width:491.64px;height:10.300000000000011px;background:#fff;"></div>
<div style="left:208.0px;top:389.2px;width:491.64px;height:21.400000000000034px;background:#e1e1e1;"></div>
<svg style="left:0px;top:0px;" width="1024" height="562" viewBox="0 0 1024 562"><path d="M208.0 343.4 V374.6" stroke="#f4f4f4" stroke-width="0.8"/><path d="M208.0 389.2 V410.6" stroke="#ececec" stroke-width="0.8"/><path d="M249.0 343.4 V374.6" stroke="#f4f4f4" stroke-width="0.8"/><path d="M249.0 389.2 V410.6" stroke="#ececec" stroke-width="0.8"/><path d="M289.9 343.4 V374.6" stroke="#f4f4f4" stroke-width="0.8"/><path d="M289.9 389.2 V410.6" stroke="#ececec" stroke-width="0.8"/><path d="M330.9 343.4 V374.6" stroke="#f4f4f4" stroke-width="0.8"/><path d="M330.9 389.2 V410.6" stroke="#ececec" stroke-width="0.8"/><path d="M371.9 343.4 V374.6" stroke="#f4f4f4" stroke-width="0.8"/><path d="M371.9 389.2 V410.6" stroke="#ececec" stroke-width="0.8"/><path d="M412.9 343.4 V374.6" stroke="#f4f4f4" stroke-width="0.8"/><path d="M412.9 389.2 V410.6" stroke="#ececec" stroke-width="0.8"/><path d="M453.8 343.4 V374.6" stroke="#f4f4f4" stroke-width="0.8"/><path d="M453.8 389.2 V410.6" stroke="#ececec" stroke-width="0.8"/><path d="M494.8 343.4 V374.6" stroke="#f4f4f4" stroke-width="0.8"/><path d="M494.8 389.2 V410.6" stroke="#ececec" stroke-width="0.8"/><path d="M535.8 343.4 V374.6" stroke="#f4f4f4" stroke-width="0.8"/><path d="M535.8 389.2 V410.6" stroke="#ececec" stroke-width="0.8"/><path d="M576.7 343.4 V374.6" stroke="#f4f4f4" stroke-width="0.8"/><path d="M576.7 389.2 V410.6" stroke="#ececec" stroke-width="0.8"/><path d="M617.7 343.4 V374.6" stroke="#f4f4f4" stroke-width="0.8"/><path d="M617.7 389.2 V410.6" stroke="#ececec" stroke-width="0.8"/><path d="M658.7 343.4 V374.6" stroke="#f4f4f4" stroke-width="0.8"/><path d="M658.7 389.2 V410.6" stroke="#ececec" stroke-width="0.8"/><path d="M699.6 343.4 V374.6" stroke="#f4f4f4" stroke-width="0.8"/><path d="M699.6 389.2 V410.6" stroke="#ececec" stroke-width="0.8"/><path d="M208.0 353.3 H699.64" stroke="#eef2f8" stroke-width="0.7"/><path d="M208.0 364.3 H699.64 M208.0 374.6 H699.64" stroke="#ececec" stroke-width="0.8"/><path d="M208.0 400.0 H699.64" stroke="#ececec" stroke-width="0.7"/><rect x="208.3" y="353.5" width="40.57" height="10.8" fill="none" stroke="#111" stroke-width="1"/><rect x="248.17" y="363.7" width="1.4" height="1.4" fill="#111"/></svg>
<span style="left:213.91px;top:344.25px;font-size:7.6px;line-height:9px;color:#1a1a2a;transform:scaleX(1.0810);transform-origin:center center;">2026-Jul</span>
<span style="left:218.98px;top:354.25px;font-size:7.6px;line-height:9px;color:#111;transform:scaleX(0.9361);transform-origin:center center;">7,385</span>
<span style="left:218.98px;top:365.25px;font-size:7.6px;line-height:9px;color:#111;transform:scaleX(0.9361);transform-origin:center center;">7,385</span>
<span style="left:216.87px;top:390.25px;font-size:7.6px;line-height:9px;color:#111;transform:scaleX(0.9361);transform-origin:center center;">85,815</span>
<span style="left:218.98px;top:401.25px;font-size:7.6px;line-height:9px;color:#111;transform:scaleX(0.9361);transform-origin:center center;">6,000</span>
<span style="left:252.99px;top:344.25px;font-size:7.6px;line-height:9px;color:#1a1a2a;transform:scaleX(0.9564);transform-origin:center center;">2026-Aug</span>
<span style="left:259.95px;top:354.25px;font-size:7.6px;line-height:9px;color:#111;transform:scaleX(0.9361);transform-origin:center center;">9,965</span>
<span style="left:259.95px;top:365.25px;font-size:7.6px;line-height:9px;color:#111;transform:scaleX(0.9361);transform-origin:center center;">9,965</span>
<span style="left:256.01px;top:390.25px;font-size:7.6px;line-height:9px;color:#111;transform:scaleX(0.9557);transform-origin:center center;">115,793</span>
<span style="left:259.95px;top:401.25px;font-size:7.6px;line-height:9px;color:#111;transform:scaleX(0.9361);transform-origin:center center;">9,000</span>
<span style="left:293.96px;top:344.25px;font-size:7.6px;line-height:9px;color:#1a1a2a;transform:scaleX(0.9564);transform-origin:center center;">2026-Sep</span>
<span style="left:298.81px;top:354.25px;font-size:7.6px;line-height:9px;color:#111;transform:scaleX(0.9361);transform-origin:center center;">21,007</span>
<span style="left:298.81px;top:365.25px;font-size:7.6px;line-height:9px;color:#111;transform:scaleX(0.9361);transform-origin:center center;">21,007</span>
<span style="left:296.70px;top:390.25px;font-size:7.6px;line-height:9px;color:#111;transform:scaleX(0.9361);transform-origin:center center;">244,097</span>
<span style="left:298.81px;top:401.25px;font-size:7.6px;line-height:9px;color:#111;transform:scaleX(0.9361);transform-origin:center center;">15,000</span>
<span style="left:335.77px;top:344.25px;font-size:7.6px;line-height:9px;color:#1a1a2a;transform:scaleX(1.0080);transform-origin:center center;">2026-Oct</span>
<span style="left:339.78px;top:354.25px;font-size:7.6px;line-height:9px;color:#111;transform:scaleX(0.9361);transform-origin:center center;">25,841</span>
<span style="left:339.78px;top:365.25px;font-size:7.6px;line-height:9px;color:#111;transform:scaleX(0.9361);transform-origin:center center;">25,841</span>
<span style="left:337.67px;top:390.25px;font-size:7.6px;line-height:9px;color:#111;transform:scaleX(0.9361);transform-origin:center center;">300,270</span>
<span style="left:339.78px;top:401.25px;font-size:7.6px;line-height:9px;color:#111;transform:scaleX(0.9361);transform-origin:center center;">23,000</span>
<span style="left:375.90px;top:344.25px;font-size:7.6px;line-height:9px;color:#1a1a2a;transform:scaleX(0.9564);transform-origin:center center;">2026-Nov</span>
<span style="left:380.75px;top:354.25px;font-size:7.6px;line-height:9px;color:#111;transform:scaleX(0.9361);transform-origin:center center;">24,360</span>
<span style="left:380.75px;top:365.25px;font-size:7.6px;line-height:9px;color:#111;transform:scaleX(0.9361);transform-origin:center center;">24,360</span>
<span style="left:378.64px;top:390.25px;font-size:7.6px;line-height:9px;color:#111;transform:scaleX(0.9361);transform-origin:center center;">283,061</span>
<span style="left:380.75px;top:401.25px;font-size:7.6px;line-height:9px;color:#111;transform:scaleX(0.9361);transform-origin:center center;">17,000</span>
<span style="left:416.87px;top:344.25px;font-size:7.6px;line-height:9px;color:#1a1a2a;transform:scaleX(0.9564);transform-origin:center center;">2026-Dec</span>
<span style="left:421.72px;top:354.25px;font-size:7.6px;line-height:9px;color:#111;transform:scaleX(0.9361);transform-origin:center center;">53,468</span>
<span style="left:421.72px;top:365.25px;font-size:7.6px;line-height:9px;color:#111;transform:scaleX(0.9361);transform-origin:center center;">53,468</span>
<span style="left:419.61px;top:390.25px;font-size:7.6px;line-height:9px;color:#111;transform:scaleX(0.9361);transform-origin:center center;">621,293</span>
<span style="left:421.72px;top:401.25px;font-size:7.6px;line-height:9px;color:#111;transform:scaleX(0.9361);transform-origin:center center;">44,000</span>
<span style="left:458.47px;top:344.25px;font-size:7.6px;line-height:9px;color:#1a1a2a;transform:scaleX(0.9946);transform-origin:center center;">2027-Jan</span>
<span style="left:462.69px;top:354.25px;font-size:7.6px;line-height:9px;color:#111;transform:scaleX(0.9361);transform-origin:center center;">32,853</span>
<span style="left:462.69px;top:365.25px;font-size:7.6px;line-height:9px;color:#111;transform:scaleX(0.9361);transform-origin:center center;">32,853</span>
<span style="left:460.58px;top:390.25px;font-size:7.6px;line-height:9px;color:#111;transform:scaleX(0.9361);transform-origin:center center;">381,757</span>
<span style="left:462.69px;top:401.25px;font-size:7.6px;line-height:9px;color:#111;transform:scaleX(0.9361);transform-origin:center center;">25,000</span>
<span style="left:499.02px;top:344.25px;font-size:7.6px;line-height:9px;color:#1a1a2a;transform:scaleX(0.9688);transform-origin:center center;">2027-Feb</span>
<span style="left:503.66px;top:354.25px;font-size:7.6px;line-height:9px;color:#111;transform:scaleX(0.9361);transform-origin:center center;">16,648</span>
<span style="left:503.66px;top:365.25px;font-size:7.6px;line-height:9px;color:#111;transform:scaleX(0.9361);transform-origin:center center;">16,648</span>
<span style="left:501.55px;top:390.25px;font-size:7.6px;line-height:9px;color:#111;transform:scaleX(0.9361);transform-origin:center center;">193,445</span>
<span style="left:503.66px;top:401.25px;font-size:7.6px;line-height:9px;color:#111;transform:scaleX(0.9361);transform-origin:center center;">13,000</span>
<span style="left:540.00px;top:344.25px;font-size:7.6px;line-height:9px;color:#1a1a2a;transform:scaleX(0.9692);transform-origin:center center;">2027-Mar</span>
<span style="left:544.63px;top:354.25px;font-size:7.6px;line-height:9px;color:#111;transform:scaleX(0.9361);transform-origin:center center;">21,950</span>
<span style="left:544.63px;top:365.25px;font-size:7.6px;line-height:9px;color:#111;transform:scaleX(0.9361);transform-origin:center center;">21,950</span>
<span style="left:542.52px;top:390.25px;font-size:7.6px;line-height:9px;color:#111;transform:scaleX(0.9361);transform-origin:center center;">255,064</span>
<span style="left:544.63px;top:401.25px;font-size:7.6px;line-height:9px;color:#111;transform:scaleX(0.9361);transform-origin:center center;">12,000</span>
<span style="left:581.59px;top:344.25px;font-size:7.6px;line-height:9px;color:#1a1a2a;transform:scaleX(1.0080);transform-origin:center center;">2027-Apr</span>
<span style="left:585.60px;top:354.25px;font-size:7.6px;line-height:9px;color:#111;transform:scaleX(0.9361);transform-origin:center center;">17,923</span>
<span style="left:585.60px;top:365.25px;font-size:7.6px;line-height:9px;color:#111;transform:scaleX(0.9361);transform-origin:center center;">17,923</span>
<span style="left:583.49px;top:390.25px;font-size:7.6px;line-height:9px;color:#111;transform:scaleX(0.9361);transform-origin:center center;">208,265</span>
<span style="left:585.60px;top:401.25px;font-size:7.6px;line-height:9px;color:#111;transform:scaleX(0.9361);transform-origin:center center;">10,000</span>
<span style="left:621.29px;top:344.25px;font-size:7.6px;line-height:9px;color:#1a1a2a;transform:scaleX(0.9325);transform-origin:center center;">2027-May</span>
<span style="left:628.68px;top:354.25px;font-size:7.6px;line-height:9px;color:#111;transform:scaleX(0.9361);transform-origin:center center;">9,662</span>
<span style="left:628.68px;top:365.25px;font-size:7.6px;line-height:9px;color:#111;transform:scaleX(0.9361);transform-origin:center center;">9,662</span>
<span style="left:624.74px;top:390.25px;font-size:7.6px;line-height:9px;color:#111;transform:scaleX(0.9557);transform-origin:center center;">112,277</span>
<span style="left:628.68px;top:401.25px;font-size:7.6px;line-height:9px;color:#111;transform:scaleX(0.9361);transform-origin:center center;">9,000</span>
<span style="left:663.32px;top:344.25px;font-size:7.6px;line-height:9px;color:#1a1a2a;transform:scaleX(0.9946);transform-origin:center center;">2027-Jun</span>
<span style="left:667.54px;top:354.25px;font-size:7.6px;line-height:9px;color:#111;transform:scaleX(0.9361);transform-origin:center center;">13,075</span>
<span style="left:667.54px;top:365.25px;font-size:7.6px;line-height:9px;color:#111;transform:scaleX(0.9361);transform-origin:center center;">13,075</span>
<span style="left:665.43px;top:390.25px;font-size:7.6px;line-height:9px;color:#111;transform:scaleX(0.9361);transform-origin:center center;">151,933</span>
<span style="left:669.65px;top:401.25px;font-size:7.6px;line-height:9px;color:#111;transform:scaleX(0.9361);transform-origin:center center;">9,000</span>
<div style="left:137.2px;top:452.2px;width:10.2px;height:10.2px;background:#fdfdfd;border:1px solid #c8c8c8;box-sizing:border-box;border-radius:1.5px;"></div>
<span style="left:139.46px;top:454.25px;font-size:6.4px;line-height:7px;color:#222;transform:scaleX(0.9495);transform-origin:center center;">%</span>
<div style="left:152.4px;top:451.6px;width:23.2px;height:10.8px;background:#fff;border:1px solid #e4e4e4;box-sizing:border-box;border-bottom:1px solid #8c8c8c"></div>
<span style="left:156.40px;top:454.25px;font-size:6.8px;line-height:7px;color:#111;transform:scaleX(0.7669);transform-origin:left center;">10</span>
<div style="left:179.4px;top:451.4px;width:7.6px;height:5.6px;background:#f6f6f6;border:1px solid #c4c4c4;box-sizing:border-box;border-radius:1.5px;"></div>
<div style="left:179.4px;top:456.8px;width:7.6px;height:5.6px;background:#f6f6f6;border:1px solid #c4c4c4;box-sizing:border-box;border-radius:1.5px;"></div>
<svg style="left:181.6px;top:453.2px;" width="3.2" height="2" viewBox="0 0 3.2 2"><path d="M0 1.9 L1.6 0.1 L3.2 1.9 Z" fill="#222"/></svg>
<svg style="left:181.6px;top:458.7px;" width="3.2" height="2" viewBox="0 0 3.2 2"><path d="M0 0.1 L1.6 1.9 L3.2 0.1 Z" fill="#222"/></svg>
<div style="left:201.5px;top:452.2px;width:9.7px;height:10.2px;background:#fdfdfd;border:1px solid #c8c8c8;box-sizing:border-box;border-radius:1.5px;"></div>
<span style="left:204.59px;top:454.25px;font-size:6.6px;line-height:7px;color:#222;transform:scaleX(1.1034);transform-origin:center center;">±</span>
<div style="left:216.7px;top:451.6px;width:23.6px;height:10.8px;background:#fff;border:1px solid #e4e4e4;box-sizing:border-box;border-bottom:1px solid #8c8c8c"></div>
<span style="left:220.50px;top:454.25px;font-size:6.8px;line-height:7px;color:#111;transform:scaleX(0.7405);transform-origin:left center;">1</span>
<div style="left:243.9px;top:451.4px;width:7.6px;height:5.6px;background:#f6f6f6;border:1px solid #c4c4c4;box-sizing:border-box;border-radius:1.5px;"></div>
<div style="left:243.9px;top:456.8px;width:7.6px;height:5.6px;background:#f6f6f6;border:1px solid #c4c4c4;box-sizing:border-box;border-radius:1.5px;"></div>
<svg style="left:246.1px;top:453.2px;" width="3.2" height="2" viewBox="0 0 3.2 2"><path d="M0 1.9 L1.6 0.1 L3.2 1.9 Z" fill="#222"/></svg>
<svg style="left:246.1px;top:458.7px;" width="3.2" height="2" viewBox="0 0 3.2 2"><path d="M0 0.1 L1.6 1.9 L3.2 0.1 Z" fill="#222"/></svg>
<div style="left:265.7px;top:452.2px;width:10.2px;height:10.2px;background:#fdfdfd;border:1px solid #c8c8c8;box-sizing:border-box;border-radius:1.5px;"></div>
<span style="left:268.87px;top:454.25px;font-size:6.6px;line-height:7px;color:#222;transform:scaleX(1.0364);transform-origin:center center;">=</span>
<div style="left:281.4px;top:451.6px;width:46.3px;height:10.8px;background:#fff;border:1px solid #e4e4e4;box-sizing:border-box;border-bottom:1px solid #8c8c8c"></div>
<span style="left:284.50px;top:454.25px;font-size:6.8px;line-height:7px;color:#111;transform:scaleX(0.9697);transform-origin:left center;">7,385</span>
<div style="left:339.4px;top:452px;width:10.6px;height:10.4px;background:#fafafa;border:1px solid #e2e2e2;box-sizing:border-box;border-radius:1.5px;"></div>
<svg style="left:342.7px;top:454.6px;" width="4" height="5" viewBox="0 0 4 5"><rect x="0.3" y="2" width="3.4" height="2.7" fill="none" stroke="#aaa" stroke-width="0.6"/><path d="M1 2 V1 A1 1 0 0 1 3 1 V2" fill="none" stroke="#aaa" stroke-width="0.6"/></svg>
<div style="left:364.2px;top:452px;width:10.6px;height:10.4px;background:#fafafa;border:1px solid #e2e2e2;box-sizing:border-box;border-radius:1.5px;"></div>
<svg style="left:367px;top:455.2px;" width="5" height="4" viewBox="0 0 5 4"><path d="M4.3 0.3 V2.2 H0.8 M2 1 L0.7 2.2 L2 3.4" fill="none" stroke="#888" stroke-width="0.6"/></svg>
<div style="left:557px;top:451.4px;width:32.6px;height:12.7px;background:#f8f8f8;border:1px solid #e4e4e4;box-sizing:border-box;border-radius:1.5px;"></div>
<span style="left:559.82px;top:453.25px;font-size:7.2px;line-height:9px;color:#8e8e8e;transform:scaleX(0.9714);transform-origin:center center;font-weight:700;">Commit</span>
<span style="left:136.20px;top:469.25px;font-size:6.8px;line-height:7px;color:#9a9a9a;transform:scaleX(0.8929);transform-origin:left center;">Comment:</span>
<div style="left:170.3px;top:467px;width:330px;height:11px;background:#fff;border:1px solid #ececec;box-sizing:border-box;"></div>
<div style="left:510.6px;top:467px;width:79px;height:11.3px;background:#fff;border:1px solid #dadada;box-sizing:border-box;"></div>
<span style="left:513.00px;top:469.25px;font-size:6.8px;line-height:7px;color:#111;transform:scaleX(0.9138);transform-origin:left center;">No History</span>
<svg style="left:581.5px;top:471px;" width="5" height="3" viewBox="0 0 5 3"><path d="M0.3 0.4 L2.5 2.5 L4.7 0.4" fill="none" stroke="#666" stroke-width="0.7"/></svg>
<div style="left:137.2px;top:484.4px;width:10.3px;height:10.2px;background:#fff;border:1px solid #c4c4c4;box-sizing:border-box;border-radius:1.5px;"></div>
<svg style="left:139.8px;top:487.4px;" width="5" height="4" viewBox="0 0 5 4"><path d="M0 0.2 L2.5 3.8 L5 0.2 Z" fill="#111"/></svg>
<div style="left:154.4px;top:483.9px;width:423.6px;height:10.6px;background:#7ba1d4;"></div>
<span style="left:167.32px;top:485.25px;font-size:6.8px;line-height:7px;color:#1a1a2a;transform:scaleX(0.8814);transform-origin:center center;">Type</span>
<span style="left:207.25px;top:485.25px;font-size:6.8px;line-height:7px;color:#1a1a2a;transform:scaleX(0.9177);transform-origin:center center;">Value</span>
<span style="left:243.47px;top:485.25px;font-size:6.8px;line-height:7px;color:#1a1a2a;transform:scaleX(0.9073);transform-origin:center center;">Previous</span>
<span style="left:330.87px;top:485.25px;font-size:6.8px;line-height:7px;color:#1a1a2a;transform:scaleX(0.8823);transform-origin:center center;">Comment</span>
<span style="left:427.32px;top:485.25px;font-size:6.8px;line-height:7px;color:#1a1a2a;transform:scaleX(0.9053);transform-origin:center center;">User</span>
<span style="left:468.32px;top:485.25px;font-size:6.8px;line-height:7px;color:#1a1a2a;transform:scaleX(0.8705);transform-origin:center center;">Date</span>
<span style="left:499.24px;top:485.25px;font-size:6.8px;line-height:7px;color:#1a1a2a;transform:scaleX(0.8853);transform-origin:center center;">Locked Y/N</span>
<span style="left:548.30px;top:485.25px;font-size:6.8px;line-height:7px;color:#1a1a2a;transform:scaleX(0.9264);transform-origin:center center;">Action</span>
<svg style="left:0px;top:0px;" width="1024" height="562" viewBox="0 0 1024 562"><path d="M195.2 483.8 V494" stroke="#a9c2e6" stroke-width="0.7"/><path d="M195.2 494 V504.2" stroke="#ececec" stroke-width="0.7"/><path d="M236.2 483.8 V494" stroke="#a9c2e6" stroke-width="0.7"/><path d="M236.2 494 V504.2" stroke="#ececec" stroke-width="0.7"/><path d="M277.2 483.8 V494" stroke="#a9c2e6" stroke-width="0.7"/><path d="M277.2 494 V504.2" stroke="#ececec" stroke-width="0.7"/><path d="M414 483.8 V494" stroke="#a9c2e6" stroke-width="0.7"/><path d="M414 494 V504.2" stroke="#ececec" stroke-width="0.7"/><path d="M455 483.8 V494" stroke="#a9c2e6" stroke-width="0.7"/><path d="M455 494 V504.2" stroke="#ececec" stroke-width="0.7"/><path d="M496 483.8 V494" stroke="#a9c2e6" stroke-width="0.7"/><path d="M496 494 V504.2" stroke="#ececec" stroke-width="0.7"/><path d="M537.5 483.8 V494" stroke="#a9c2e6" stroke-width="0.7"/><path d="M537.5 494 V504.2" stroke="#ececec" stroke-width="0.7"/><path d="M578 483.8 V494" stroke="#a9c2e6" stroke-width="0.7"/><path d="M578 494 V504.2" stroke="#ececec" stroke-width="0.7"/><path d="M154.2 504.2 H578 M154.2 494 V504.2" stroke="#ececec" stroke-width="0.7"/></svg>
<div style="left:581.4px;top:483.8px;width:8.8px;height:48.7px;background:#ebebeb;"></div>
<div style="left:585.2px;top:493.5px;width:1px;height:8.5px;background:#555;"></div>
<div style="left:0px;top:0px;width:1024px;height:1px;background:#2f76d6;"></div>
<div style="left:0px;top:0px;width:1px;height:562px;background:#2f76d6;"></div>
<div style="left:1023px;top:0px;width:1px;height:562px;background:#2f76d6;"></div>
<div style="left:0px;top:561px;width:1024px;height:1px;background:#2f76d6;"></div>
</body></html>
